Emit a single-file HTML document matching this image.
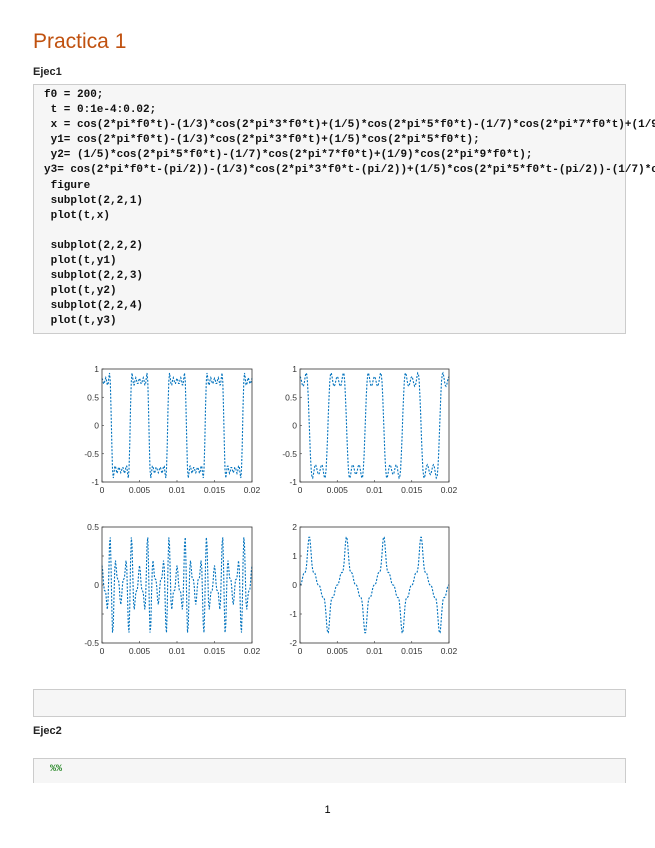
<!DOCTYPE html>
<html><head><meta charset="utf-8"><style>
body{margin:0;background:#fff;width:655px;height:848px;position:relative;font-family:"Liberation Sans",sans-serif;overflow:hidden}
h1{position:absolute;left:33px;top:30px;margin:0;font-size:21px;font-weight:normal;color:#c0510f}
.h2{position:absolute;left:33px;font-size:11px;font-weight:bold;color:#222}
.box{position:absolute;left:33px;width:591px;background:#f6f6f6;border:1px solid #ccc}
pre{margin:0;position:absolute;left:10px;top:3px;width:612px;overflow:hidden;font-family:"Liberation Mono",monospace;font-size:11px;line-height:15.1px;color:#111;font-weight:600;letter-spacing:0}
svg text{font-family:"Liberation Sans",sans-serif;font-size:8.5px;fill:#333}
</style></head><body>
<h1>Practica 1</h1>
<div class="h2" style="top:66px">Ejec1</div>
<div class="box" style="top:84px;height:248px"><pre>f0 = 200;
 t = 0:1e-4:0.02;
 x = cos(2*pi*f0*t)-(1/3)*cos(2*pi*3*f0*t)+(1/5)*cos(2*pi*5*f0*t)-(1/7)*cos(2*pi*7*f0*t)+(1/9)*cos(2*pi*9*f0*t);
 y1= cos(2*pi*f0*t)-(1/3)*cos(2*pi*3*f0*t)+(1/5)*cos(2*pi*5*f0*t);
 y2= (1/5)*cos(2*pi*5*f0*t)-(1/7)*cos(2*pi*7*f0*t)+(1/9)*cos(2*pi*9*f0*t);
y3= cos(2*pi*f0*t-(pi/2))-(1/3)*cos(2*pi*3*f0*t-(pi/2))+(1/5)*cos(2*pi*5*f0*t-(pi/2))-(1/7)*cos(2*pi*7*f0*t-(pi/2));
 figure
 subplot(2,2,1)
 plot(t,x)

 subplot(2,2,2)
 plot(t,y1)
 subplot(2,2,3)
 plot(t,y2)
 subplot(2,2,4)
 plot(t,y3)</pre></div>
<svg id="fig" width="655" height="848" style="position:absolute;left:0;top:0"></svg>
<div class="box" style="top:689px;height:26px"></div>
<div class="h2" style="top:725px">Ejec2</div>
<div class="box" style="top:758px;height:24px;border-bottom:none"><span style="position:absolute;left:16px;top:5px;font-family:'Liberation Mono',monospace;font-size:10px;color:#2a8a2a;font-weight:bold">%%</span></div>
<div style="position:absolute;left:0;width:655px;top:804px;text-align:center;font-size:11px">1</div>
<script>
var s=document.getElementById('fig'),h='';
function f(k,t){var w=2*Math.PI*200*t,c=Math.cos;
if(k==0)return c(w)-c(3*w)/3+c(5*w)/5-c(7*w)/7+c(9*w)/9;
if(k==1)return c(w)-c(3*w)/3+c(5*w)/5;
if(k==2)return c(5*w)/5-c(7*w)/7+c(9*w)/9;
var p=Math.PI/2;return c(w-p)-c(3*w-p)/3+c(5*w-p)/5-c(7*w-p)/7;}
var P=[[102,369,252,482,-1,1,['1','0.5','0','-0.5','-1']],[300,369,449,482,-1,1,['1','0.5','0','-0.5','-1']],
[102,527,252,643,-0.5,0.5,['0.5','','0','','-0.5']],[300,527,449,643,-2,2,['2','1','0','-1','-2']]];
P.forEach(function(a,k){var x0=a[0],y0=a[1],x1=a[2],y1=a[3],lo=a[4],hi=a[5],pts=[];
for(var i=0;i<=200;i++){var t=i*1e-4,v=f(k,t);pts.push((x0+(x1-x0)*t/0.02).toFixed(1)+','+(y1-(y1-y0)*(v-lo)/(hi-lo)).toFixed(1));}
h+='<polyline points="'+pts.join(' ')+'" fill="none" stroke="#0072bd" stroke-width="1.1" stroke-dasharray="2 1.5"/>';
h+='<rect x="'+x0+'" y="'+y0+'" width="'+(x1-x0)+'" height="'+(y1-y0)+'" fill="none" stroke="#333" stroke-width="0.8"/>';
a[6].forEach(function(l,j){var y=y0+(y1-y0)*j/4;if(l)h+='<text x="'+(x0-3)+'" y="'+(y+3)+'" text-anchor="end">'+l+'</text>';
h+='<line x1="'+x0+'" x2="'+(x0+2)+'" y1="'+y+'" y2="'+y+'" stroke="#333" stroke-width="0.6"/>';});
['0','0.005','0.01','0.015','0.02'].forEach(function(l,j){var x=x0+(x1-x0)*j/4;h+='<text x="'+x+'" y="'+(y1+11)+'" text-anchor="middle">'+l+'</text>';
h+='<line x1="'+x+'" x2="'+x+'" y1="'+y1+'" y2="'+(y1-2)+'" stroke="#333" stroke-width="0.6"/>';});
});
s.innerHTML=h;
</script>
</body></html>
